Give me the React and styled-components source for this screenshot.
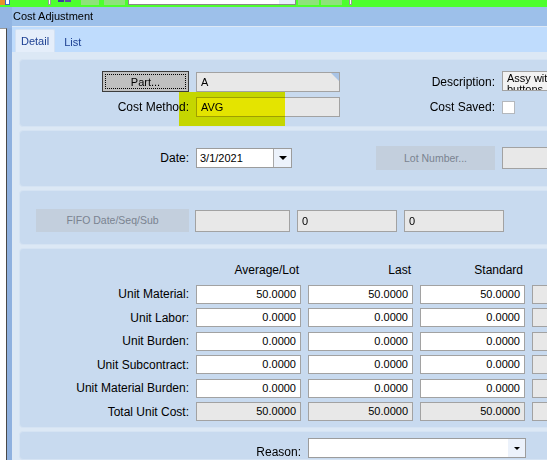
import styled, { createGlobalStyle } from "styled-components";

const GlobalStyle = createGlobalStyle`
  html, body {
    margin: 0;
    padding: 0;
    width: 547px;
    height: 460px;
    overflow: hidden;
    background: #dce8f5;
  }
  body {
    font-family: "Liberation Sans", Arial, sans-serif;
    color: #000;
  }
`;

const costRows = [
  { label: "Unit Material:", values: ["50.0000", "50.0000", "50.0000"] },
  { label: "Unit Labor:", values: ["0.0000", "0.0000", "0.0000"] },
  { label: "Unit Burden:", values: ["0.0000", "0.0000", "0.0000"] },
  { label: "Unit Subcontract:", values: ["0.0000", "0.0000", "0.0000"] },
  { label: "Unit Material Burden:", values: ["0.0000", "0.0000", "0.0000"] },
  { label: "Total Unit Cost:", values: ["50.0000", "50.0000", "50.0000"], total: true },
];

export default function App() {
  return (
    <>
      <GlobalStyle />
      <Toolbar>
        <ToolChip $w={5} $bg="#e8902c" />
        <ToolChip $w={5} $bg="#ffffff" $border="#3a6cc0" />
        <ToolChip $w={3} $ml={38} $bg="#ffffff" $border="#9a9a9a" />
        <ToolChip $w={6} $ml={7} $h={9} $bg="#3a3f9a" />
        <ToolChip $w={6} $ml={1} $h={9} $bg="#5a4aa8" />
        <ToolChip $w={18} $ml={10} $bg="#8ee37a" />
        <ToolChip $w={21} $ml={5} $bg="#8ee37a" />
        <SearchBox />
        <ToolChip $w={21} $ml={2} $bg="#8ee37a" />
        <ToolChip $w={21} $ml={2} $bg="#8ee37a" />
        <ToolChip $w={3} $ml={7} $bg="#ffffff" $border="#9a9a9a" />
      </Toolbar>
      <Body>
        <Dock>
          <DockTop />
          <DockRest>
            <DockWhite />
            <DockStrip />
          </DockRest>
        </Dock>
        <Main>
          <TitleBar>Cost Adjustment</TitleBar>
          <TitleRule />
          <TabStrip>
            <Tab $active>Detail</Tab>
            <Tab>List</Tab>
          </TabStrip>
          <Content>
            <Panel $h={68}>
              <HeadGrid>
                <PartButton>
                  <FocusRing>Part...</FocusRing>
                </PartButton>
                <Field $w={144} $h={20} $corner>
                  A
                </Field>
                <Label>Description:</Label>
                <DescField>Assy with buttons</DescField>
                <Label>Cost Method:</Label>
                <Field $w={144} $h={20}>
                  AVG
                </Field>
                <Label>Cost Saved:</Label>
                <Checkbox />
              </HeadGrid>
              <Highlight />
            </Panel>

            <Panel $h={57}>
              <DateGrid>
                <Label>Date:</Label>
                <Combo $w={96} $h={20}>
                  <ComboText>3/1/2021</ComboText>
                  <ComboArrow $boxed>
                    <Arrow />
                  </ComboArrow>
                </Combo>
                <GhostButton $w={119} $h={24}>
                  Lot Number...
                </GhostButton>
                <Field $w={100} $h={22} />
              </DateGrid>
            </Panel>

            <Panel $h={55}>
              <FifoRow>
                <GhostButton $w={153} $h={23}>
                  FIFO Date/Seq/Sub
                </GhostButton>
                <Field $w={95} $h={22} />
                <Field $w={100} $h={22}>
                  0
                </Field>
                <Field $w={100} $h={22}>
                  0
                </Field>
              </FifoRow>
            </Panel>

            <Panel $h={180}>
              <CostGrid>
                <span />
                <ColHead>Average/Lot</ColHead>
                <ColHead>Last</ColHead>
                <ColHead>Standard</ColHead>
                <span />
                {costRows.map((row) => (
                  <CostRow key={row.label} row={row} />
                ))}
              </CostGrid>
            </Panel>

            <Panel>
              <ReasonGrid>
                <ReasonLabel>Reason:</ReasonLabel>
                <Combo $w={218} $h={20} $white>
                  <ComboText />
                  <ComboArrow>
                    <Arrow $small />
                  </ComboArrow>
                </Combo>
              </ReasonGrid>
            </Panel>
          </Content>
        </Main>
      </Body>
    </>
  );
}

function CostRow({ row }) {
  return (
    <>
      <Label>{row.label}</Label>
      {row.values.map((v, i) => (
        <NumField key={i} $total={row.total}>
          {v}
        </NumField>
      ))}
      <NumField $total />
    </>
  );
}

const Toolbar = styled.div`
  height: 7px;
  background: #4dff2e;
  display: flex;
  align-items: flex-end;
  overflow: hidden;
`;

const ToolChip = styled.div`
  flex: none;
  width: ${(p) => p.$w}px;
  height: ${(p) => p.$h || 20}px;
  margin-left: ${(p) => p.$ml || 0}px;
  margin-bottom: ${(p) => (p.$h ? 5 : 2)}px;
  background: ${(p) => p.$bg};
  box-sizing: border-box;
  border: ${(p) => (p.$border ? `1px solid ${p.$border}` : "none")};
`;

const SearchBox = styled.div`
  flex: none;
  width: 168px;
  height: 20px;
  margin-left: 3px;
  margin-bottom: 2px;
  box-sizing: border-box;
  border: 1px solid #8a8a8a;
  background: linear-gradient(to right, #ffffff 0, #ffffff 150px, #e6eefa 150px);
`;

const Body = styled.div`
  display: flex;
  height: 453px;
`;

const Dock = styled.div`
  width: 12px;
  flex: none;
  display: flex;
  flex-direction: column;
`;

const DockTop = styled.div`
  height: 21px;
  background: #93b6e3;
`;

const DockRest = styled.div`
  flex: 1;
  display: flex;
`;

const DockWhite = styled.div`
  width: 6px;
  background: #ffffff;
  border-right: 1px solid #4a4a4a;
  border-top: 1px solid #9a9a9a;
`;

const DockStrip = styled.div`
  flex: 1;
  background: #8fb1df;
`;

const Main = styled.div`
  flex: 1;
  min-width: 0;
  display: flex;
  flex-direction: column;
  overflow: hidden;
`;

const TitleBar = styled.div`
  height: 19px;
  line-height: 19px;
  padding-left: 1px;
  background: #9dc0ea;
  font-size: 11px;
  color: #000;
`;

const TitleRule = styled.div`
  height: 2px;
  background: #dde8f5;
`;

const TabStrip = styled.div`
  height: 25px;
  background: #bfdcfd;
  display: flex;
  align-items: flex-end;
  padding-left: 3px;
  gap: 4px;
`;

const Tab = styled.div`
  height: 23px;
  box-sizing: border-box;
  padding: 0 ${(p) => (p.$active ? "5px" : "4px")};
  font-size: 11px;
  line-height: 22px;
  color: #1c3f92;
  border-radius: 2px 2px 0 0;
  background: ${(p) => (p.$active ? "#e5eefa" : "transparent")};
  border: 1px solid ${(p) => (p.$active ? "#d3e1f3" : "transparent")};
  border-bottom: none;
  ${(p) => !p.$active && "margin-top: 2px; line-height: 24px;"}
`;

const Content = styled.div`
  flex: 1;
  background: #dce8f5;
  padding: 7px 0 0 7px;
  display: flex;
  flex-direction: column;
  gap: 3px;
`;

const Panel = styled.section`
  position: relative;
  flex: none;
  width: 560px;
  ${(p) => (p.$h ? `height: ${p.$h}px;` : "flex: 1;")}
  box-sizing: border-box;
  background: #c8daef;
  border: 1px solid #d5e3f3;
  border-radius: 4px;
`;

const Label = styled.div`
  font-size: 12px;
  text-align: right;
  white-space: nowrap;
  align-self: center;
`;

const HeadGrid = styled.div`
  display: grid;
  grid-template-columns: 169px 144px 148px 120px;
  grid-template-rows: 21px 20px;
  column-gap: 7px;
  row-gap: 5px;
  padding-top: 11px;
`;

const PartButton = styled.div`
  justify-self: end;
  width: 87px;
  height: 21px;
  box-sizing: border-box;
  background: #c0c0c0;
  border: 1px solid #3c3c3c;
  padding: 2px;
`;

const FocusRing = styled.div`
  height: 100%;
  box-sizing: border-box;
  border: 1px dotted #000;
  font-size: 11px;
  line-height: 14px;
  text-align: center;
`;

const Field = styled.div`
  position: relative;
  width: ${(p) => p.$w}px;
  height: ${(p) => p.$h}px;
  box-sizing: border-box;
  align-self: center;
  background: ${(p) => (p.$white ? "#ffffff" : "#e8e8e8")};
  border: 1px solid #a2a2a2;
  font-size: 11px;
  line-height: ${(p) => p.$h - 2}px;
  padding-left: 4px;
  ${(p) =>
    p.$corner &&
    `&::after {
      content: "";
      position: absolute;
      top: 0;
      right: 0;
      border-style: solid;
      border-width: 0 8px 8px 0;
      border-color: transparent #a9c4e6 transparent transparent;
    }`}
`;

const DescField = styled.div`
  width: 80px;
  height: 20px;
  box-sizing: border-box;
  overflow: hidden;
  background: #f2f2f2;
  border: 1px solid #a2a2a2;
  border-right: none;
  padding: 1px 4px;
  font-size: 11px;
  line-height: 11px;
`;

const Checkbox = styled.div`
  width: 13px;
  height: 13px;
  box-sizing: border-box;
  align-self: center;
  background: #ffffff;
  border: 1px solid #b4b8bd;
`;

const Highlight = styled.div`
  position: absolute;
  left: 159px;
  top: 32px;
  width: 106px;
  height: 34px;
  background: #fbfb00;
  mix-blend-mode: multiply;
  pointer-events: none;
`;

const DateGrid = styled.div`
  display: grid;
  grid-template-columns: 169px 144px 148px 120px;
  grid-template-rows: 24px;
  column-gap: 7px;
  align-items: center;
  padding-top: 15px;
`;

const Combo = styled.div`
  display: flex;
  width: ${(p) => p.$w}px;
  height: ${(p) => p.$h}px;
  box-sizing: border-box;
  background: #ffffff;
  border: 1px solid #9c9c9c;
`;

const ComboText = styled.div`
  flex: 1;
  font-size: 11px;
  line-height: 18px;
  padding-left: 3px;
`;

const ComboArrow = styled.div`
  width: 17px;
  display: flex;
  align-items: center;
  justify-content: center;
  background: #ecf2fb;
  border-left: ${(p) => (p.$boxed ? "1px solid #a8a8a8" : "none")};
`;

const Arrow = styled.div`
  width: 0;
  height: 0;
  border-left: ${(p) => (p.$small ? 3 : 4)}px solid transparent;
  border-right: ${(p) => (p.$small ? 3 : 4)}px solid transparent;
  border-top: ${(p) => (p.$small ? 3 : 4)}px solid #000;
`;

const GhostButton = styled.div`
  justify-self: end;
  flex: none;
  width: ${(p) => p.$w}px;
  height: ${(p) => p.$h}px;
  background: #c3cfdd;
  color: #7a8390;
  font-size: 10.5px;
  line-height: ${(p) => p.$h}px;
  text-align: center;
`;

const FifoRow = styled.div`
  display: flex;
  align-items: center;
  gap: 7px;
  padding: 18px 0 0 16px;
  & > div:nth-child(2) {
    margin-left: -1px;
  }
`;

const CostGrid = styled.div`
  display: grid;
  grid-template-columns: 169px repeat(4, 105px);
  grid-auto-rows: 19px;
  column-gap: 7px;
  row-gap: 4.5px;
  padding-top: 12px;
`;

const ColHead = styled.div`
  font-size: 12px;
  text-align: right;
  padding-right: 2px;
  line-height: 19px;
`;

const NumField = styled.div`
  box-sizing: border-box;
  background: ${(p) => (p.$total ? "#e8e8e8" : "#ffffff")};
  border: 1px solid #a2a2a2;
  font-size: 11px;
  line-height: 17px;
  text-align: right;
  padding-right: 4px;
`;

const ReasonGrid = styled.div`
  display: grid;
  grid-template-columns: 281px 218px;
  column-gap: 7px;
  padding-top: 6px;
`;

const ReasonLabel = styled(Label)`
  align-self: start;
  padding-top: 7px;
`;
